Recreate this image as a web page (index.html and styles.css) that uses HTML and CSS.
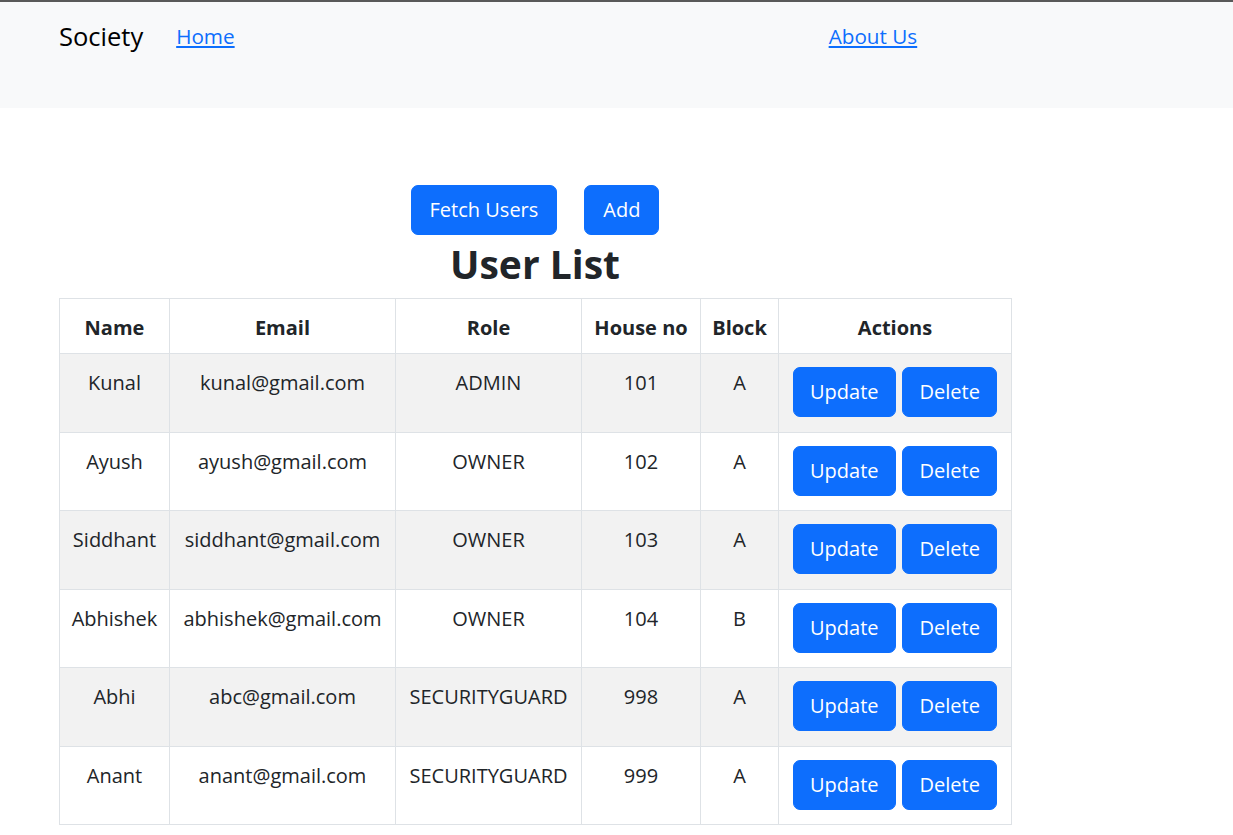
FILE: index.html
```html
<!DOCTYPE html>
<html lang="en">
<head>
<meta charset="utf-8">
<title>Society</title>
<link rel="stylesheet" href="styles.css">
</head>
<body>
<nav class="navbar">
  <a class="brand" href="#">Society</a>
  <ul class="nav-links">
    <li><a href="#">Home</a></li>
    <li><a href="#">About Us</a></li>
  </ul>
</nav>
<main class="content">
  <div class="toolbar">
    <button class="btn">Fetch Users</button>
    <button class="btn">Add</button>
  </div>
  <h2 class="title">User List</h2>
  <table class="users">
    <colgroup>
      <col class="c-name"><col class="c-email"><col class="c-role"><col class="c-house"><col class="c-block"><col class="c-actions">
    </colgroup>
    <thead>
      <tr><th>Name</th><th>Email</th><th>Role</th><th>House no</th><th>Block</th><th>Actions</th></tr>
    </thead>
    <tbody>
      <tr><td>Kunal</td><td>kunal@gmail.com</td><td>ADMIN</td><td>101</td><td>A</td><td><div class="actions"><button class="btn">Update</button><button class="btn">Delete</button></div></td></tr>
      <tr><td>Ayush</td><td>ayush@gmail.com</td><td>OWNER</td><td>102</td><td>A</td><td><div class="actions"><button class="btn">Update</button><button class="btn">Delete</button></div></td></tr>
      <tr><td>Siddhant</td><td>siddhant@gmail.com</td><td>OWNER</td><td>103</td><td>A</td><td><div class="actions"><button class="btn">Update</button><button class="btn">Delete</button></div></td></tr>
      <tr><td>Abhishek</td><td>abhishek@gmail.com</td><td>OWNER</td><td>104</td><td>B</td><td><div class="actions"><button class="btn">Update</button><button class="btn">Delete</button></div></td></tr>
      <tr><td>Abhi</td><td>abc@gmail.com</td><td>SECURITYGUARD</td><td>998</td><td>A</td><td><div class="actions"><button class="btn">Update</button><button class="btn">Delete</button></div></td></tr>
      <tr><td>Anant</td><td>anant@gmail.com</td><td>SECURITYGUARD</td><td>999</td><td>A</td><td><div class="actions"><button class="btn">Update</button><button class="btn">Delete</button></div></td></tr>
    </tbody>
  </table>
</main>
</body>
</html>
```

FILE: styles.css
```css
* { box-sizing: border-box; }
html, body { margin: 0; padding: 0; }
body {
  font-family: "Open Sans", "Noto Sans", "DejaVu Sans", sans-serif;
  font-size: 20px;
  line-height: 1.5;
  color: #212529;
  background: #fff;
  border-top: 2px solid #595959;
}
.navbar {
  background: #f8f9fa;
  height: 106px;
  display: flex;
  align-items: flex-start;
  padding: 17px 59px 0;
}
.brand {
  font-size: 25.5px;
  line-height: 34px;
  color: #000;
  text-decoration: none;
  margin-right: 33px;
}
.nav-links {
  list-style: none;
  margin: 0;
  padding: 0;
  display: flex;
  gap: 594px;
}
.nav-links a {
  font-size: 20.7px;
  color: #0d6efd;
  text-decoration: underline;
  line-height: 34px;
  display: block;
}
.content {
  width: 952px;
  margin: 77px 0 0 59px;
  text-align: center;
}
.toolbar {
  display: flex;
  justify-content: center;
  gap: 27px;
}
.btn {
  font-family: inherit;
  font-size: 20px;
  line-height: 30px;
  color: #fff;
  background: #0d6efd;
  border: 1px solid #0d6efd;
  border-radius: 7px;
  padding: 9px 18px;
  cursor: pointer;
}
.title {
  margin: 0;
  font-size: 39px;
  line-height: 57px;
  padding-bottom: 6px;
  font-weight: 700;
}
.users {
  width: 100%;
  border-collapse: collapse;
  table-layout: fixed;
  border: 1px solid #dee2e6;
}
.c-name { width: 110px; }
.c-email { width: 226px; }
.c-role { width: 186px; }
.c-house { width: 119px; }
.c-block { width: 78px; }
.c-actions { width: 233px; }
.users th, .users td {
  border: 1px solid #dee2e6;
  padding: 14px 4px 10px;
  vertical-align: top;
  text-align: center;
  white-space: nowrap;
}
.users th {
  height: 55px;
  padding-top: 14px;
  font-weight: 700;
}
.users td { height: 78.5px; }
.users tbody tr:nth-child(odd) td { background: #f2f2f2; }
.actions {
  display: flex;
  justify-content: center;
  gap: 6px;
}
.actions .btn { padding: 9px 16.5px; }
.users td:last-child { padding-top: 13px; }
```
